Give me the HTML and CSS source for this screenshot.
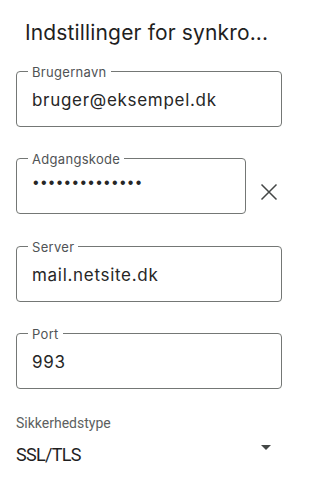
FILE: index.html
```html
<!DOCTYPE html>
<html lang="da">
<head>
<meta charset="utf-8">
<link rel="stylesheet" href="styles.css">
</head>
<body>
<div class="page">
  <h1 class="title">Indstillinger for synkro...</h1>
  <div class="field">
    <span class="label">Brugernavn</span>
    <span class="value">bruger@eksempel.dk</span>
  </div>
  <div class="row">
    <div class="field grow">
      <span class="label">Adgangskode</span>
      <span class="value dots">••••••••••••••</span>
    </div>
    <div class="clear">
      <svg width="24" height="24" viewBox="0 0 24 24"><path d="M4.5 4.5 L19.5 19.5 M19.5 4.5 L4.5 19.5" stroke="#444746" stroke-width="1.5" fill="none"/></svg>
    </div>
  </div>
  <div class="field">
    <span class="label">Server</span>
    <span class="value">mail.netsite.dk</span>
  </div>
  <div class="field">
    <span class="label">Port</span>
    <span class="value">993</span>
  </div>
  <div class="select">
    <div class="select-label">Sikkerhedstype</div>
    <div class="select-row">
      <span class="select-value">SSL/TLS</span>
      <svg class="caret" width="10" height="5" viewBox="0 0 10 5"><path d="M0 0 L10 0 L5 5 Z" fill="#444746"/></svg>
    </div>
  </div>
</div>
</body>
</html>
```

FILE: styles.css
```css
html, body {
  margin: 0;
  padding: 0;
  background: #ffffff;
}
body {
  width: 298px;
  font-family: Roboto, "Liberation Sans", sans-serif;
  color: #1f1f1f;
}
.page {
  padding: 0 16px;
  display: flex;
  flex-direction: column;
}
.title {
  margin: 0;
  padding: 19px 0 0 9px;
  font-family: Inter, Roboto, sans-serif;
  font-size: 21px;
  font-weight: 400;
  letter-spacing: 0.15px;
  line-height: 28px;
  height: 51px;
  box-sizing: border-box;
  color: #1f1f1f;
  white-space: nowrap;
}
.field {
  position: relative;
  height: 56px;
  box-sizing: border-box;
  border: 1px solid #747775;
  border-radius: 4px;
  display: flex;
  align-items: center;
  padding: 0 15px;
  margin-top: 20px;
}
.row {
  display: flex;
  align-items: center;
  margin-top: 31px;
}
.row .field {
  margin-top: 0;
}
.grow {
  flex: 1;
}
.clear {
  width: 35px;
  display: flex;
  justify-content: flex-end;
  padding-top: 12px;
  padding-right: 1px;
}
.row + .field {
  margin-top: 32px;
}
.field + .field {
  margin-top: 31px;
}
.label {
  position: absolute;
  top: -8px;
  left: 11px;
  padding: 0 4px;
  background: #ffffff;
  font-family: Inter, Roboto, sans-serif;
  font-size: 13px;
  letter-spacing: 0.3px;
  line-height: 16px;
  color: #505355;
}
.value {
  font-family: Inter, Roboto, sans-serif;
  font-size: 17px;
  letter-spacing: 0.7px;
  line-height: 24px;
  color: #262626;
  padding-top: 2px;
}
.dots {
  font-family: "Liberation Sans", sans-serif;
  letter-spacing: 2.3px;
  font-size: 16px;
  padding-top: 0;
  margin-top: -6px;
  margin-left: 1px;
}
.select {
  margin-top: 26px;
}
.select-label {
  font-size: 14px;
  line-height: 16px;
  color: #5c5f61;
}
.select-row {
  display: flex;
  align-items: flex-start;
  justify-content: space-between;
  margin-top: 12px;
  padding-right: 11px;
}
.select-value {
  font-size: 18px;
  letter-spacing: -0.7px;
  line-height: 24px;
  color: #1f1f1f;
}
.caret {
  margin-top: 2px;
}
```
